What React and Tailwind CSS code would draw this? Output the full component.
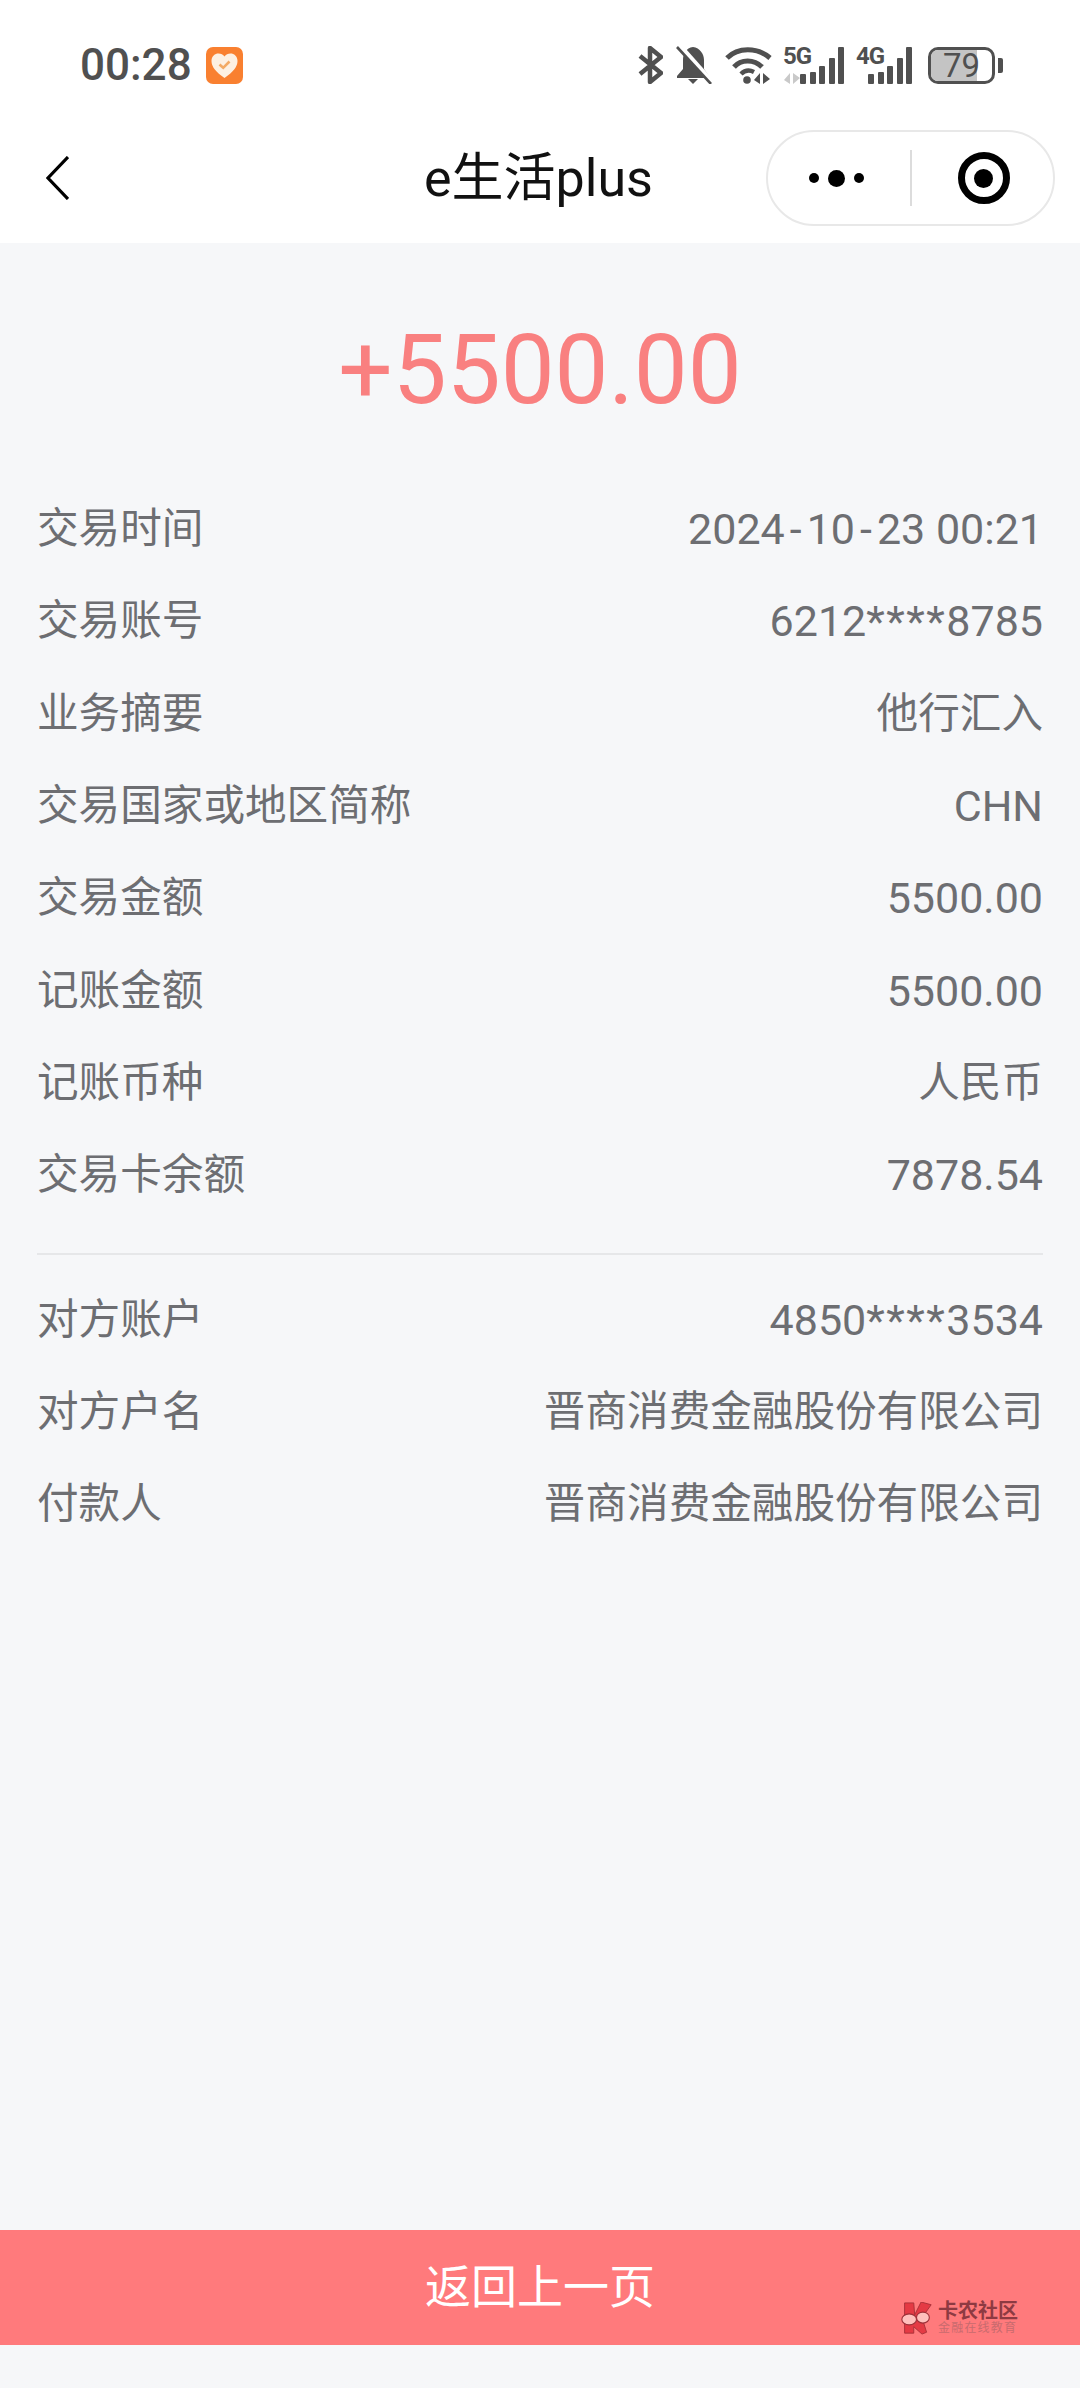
const sans = '"Roboto","Noto Sans CJK SC",sans-serif';

function Row({ label, children, latin }) {
  return (
    <div className="flex h-[92.3px] items-center justify-between">
      <span>{label}</span>
      <span className={latin ? "text-[43px]" : ""}>{children}</span>
    </div>
  );
}

function Stars() {
  return <span className="tracking-[1.5px]">****</span>;
}

function Hy() {
  return <span className="px-[5px]">-</span>;
}

function Bars({ hs }) {
  return (
    <div className="flex items-end gap-[3.5px]">
      {hs.map((h, i) => (
        <div key={i} className="w-[6px] rounded-[1px] bg-[#505050]" style={{ height: h }} />
      ))}
    </div>
  );
}

function StatusBar() {
  return (
    <div className="flex h-[130px] items-center justify-between pl-[80px] pr-[77px]">
      <div className="flex items-center gap-[14px]">
        <span className="text-[44px] font-medium leading-none text-[#505050]">00:28</span>
        <svg width="37" height="37" viewBox="0 0 37 37">
          <rect width="37" height="37" rx="7" fill="#f98030" />
          <path d="M18.5 31 C10 25 5.5 20 5.5 14 C5.5 9 9 6.5 12.5 6.5 C15 6.5 17.2 7.7 18.5 9.5 C19.8 7.7 22 6.5 24.5 6.5 C28 6.5 31.5 9 31.5 14 C31.5 20 27 25 18.5 31Z" fill="#fdf0e2" />
          <path d="M13.5 17.5 L17.2 20.8 L23.5 14.5" fill="none" stroke="#f3aa65" strokeWidth="2.6" />
        </svg>
      </div>
      <div className="flex items-center">
        <svg width="25" height="38" viewBox="0 0 25 38" fill="none" stroke="#505050" strokeWidth="4.5" strokeLinejoin="round" className="mr-[13px]">
          <path d="M2 10 L23 27 L12 36 V2 L23 11 L2 28" />
        </svg>
        <svg width="36" height="38" viewBox="0 0 36 38" className="mr-[13px]">
          <path d="M17 1 C10 2 7 8 7 14 V23 L1 30 V32 H33 V30 L28 23 V14 C28 8 24 2 17 1Z" fill="#505050" />
          <path d="M12 33 H22 L17 38Z" fill="#505050" />
          <path d="M4 0 L35 35" stroke="#fff" strokeWidth="5" />
          <path d="M1 1 L35 38" stroke="#505050" strokeWidth="2.6" />
        </svg>
        <svg width="47" height="37" viewBox="0 0 47 37" fill="none" className="mr-[11px]">
          <path d="M2 11 C13 0 32 0 45 11" stroke="#505050" strokeWidth="5" />
          <path d="M9 20 C16 12 29 12 37 20" stroke="#505050" strokeWidth="5" />
          <path d="M16 27 C20 23 25 23 29 25" stroke="#505050" strokeWidth="4.5" />
          <circle cx="22" cy="33" r="3.8" fill="#505050" />
          <path d="M35 37 V26 L29 33Z M38 26 V37 L45 32Z" fill="#505050" />
        </svg>
        <div className="relative mr-[12px] h-[37px] w-[61px]">
          <span className="absolute left-0 top-[-3px] text-[24px] font-bold leading-[24px] tracking-[-1px] text-[#505050]">5G</span>
          <svg width="18" height="11" viewBox="0 0 18 11" className="absolute bottom-0 left-0">
            <path d="M7 11 V0 L1 7Z M10 0 V11 L17 5Z" fill="#c9c9c9" />
          </svg>
          <div className="absolute bottom-0 right-0"><Bars hs={[10, 12, 18, 26, 37]} /></div>
        </div>
        <div className="relative mr-[16px] h-[37px] w-[56px]">
          <span className="absolute left-0 top-[-3px] text-[24px] font-bold leading-[24px] tracking-[-1px] text-[#505050]">4G</span>
          <div className="absolute bottom-0 right-0"><Bars hs={[10, 12, 18, 26, 37]} /></div>
        </div>
        <div className="flex items-center gap-[3px]">
          <div className="relative flex h-[37px] w-[67px] items-center justify-center overflow-hidden rounded-[10px] border-[3px] border-[#505050] bg-white">
            <div className="absolute inset-y-0 left-0 w-[46px] bg-[#c4c4c4]" />
            <span className="relative text-[33px] leading-none text-[#505050]">79</span>
          </div>
          <div className="h-[15px] w-[5px] rounded-r-[2px] bg-[#505050]" />
        </div>
      </div>
    </div>
  );
}

function NavBar() {
  return (
    <div className="relative flex h-[113px] items-center justify-between pb-[17px] pl-[46px] pr-[25px]">
      <svg width="23" height="44" viewBox="0 0 23 44" fill="none" stroke="#000" strokeWidth="3.2">
        <path d="M22 1 L2 22 L22 43" />
      </svg>
      <span className="absolute left-[424px] top-[16px] text-[52px] leading-[66px] text-[#111]">e生活plus</span>
      <div className="flex h-[96px] w-[289px] items-center rounded-full border-2 border-[#e8e8e8] bg-white">
        <div className="flex w-[142px] items-center justify-center gap-[9px] pr-[5px]">
          <span className="h-[10px] w-[10px] rounded-full bg-black" />
          <span className="h-[17px] w-[17px] rounded-full bg-black" />
          <span className="h-[10px] w-[10px] rounded-full bg-black" />
        </div>
        <div className="h-[56px] w-[2px] bg-[#dcdcdc]" />
        <div className="flex flex-1 items-center justify-center pl-[2px]">
          <div className="flex h-[52px] w-[52px] items-center justify-center rounded-full border-[7px] border-black">
            <span className="h-[19px] w-[19px] rounded-full bg-black" />
          </div>
        </div>
      </div>
    </div>
  );
}

function Watermark() {
  return (
    <div className="absolute bottom-[10px] left-[100px] flex items-center gap-[5px]">
      <svg width="33" height="33" viewBox="0 0 36 36">
        <path d="M5 1 H15 L16 14 L23 0 L34 3 L24 17 L29 33 L24 35 L15 27 V34 H5Z" fill="#e43a44" stroke="#a83038" strokeWidth="1" />
        <ellipse cx="10" cy="19" rx="8" ry="6" fill="#ffc0bc" stroke="#9c3038" strokeWidth="1.2" />
        <ellipse cx="25" cy="17" rx="7" ry="6" fill="#ffc0bc" stroke="#9c3038" strokeWidth="1.2" />
      </svg>
      <div className="flex flex-col">
        <span className="text-[20px] font-bold leading-[20px] text-[#8e3a42]">卡农社区</span>
        <span className="text-[12px] leading-[14px] tracking-[1.2px] text-[#c96a6e]">金融在线教育</span>
      </div>
    </div>
  );
}

export default function App() {
  return (
    <div className="flex h-[2388px] w-[1080px] flex-col overflow-hidden bg-[#f6f7f9]" style={{ fontFamily: sans }}>
      <header className="h-[243px] bg-white">
        <StatusBar />
        <NavBar />
      </header>
      <main className="flex flex-1 flex-col">
        <div className="flex h-[183px] items-end justify-center text-[96px] leading-[112px] text-[#f98080]">
          +5500.00
        </div>
        <div className="px-[37px] pt-[57px] text-[41.6px] leading-[56px] text-[#6d6e72]">
          <Row label="交易时间" latin>2024<Hy />10<Hy />23 00:21</Row>
          <Row label="交易账号" latin>6212<Stars />8785</Row>
          <Row label="业务摘要">他行汇入</Row>
          <Row label="交易国家或地区简称" latin>CHN</Row>
          <Row label="交易金额" latin>5500.00</Row>
          <Row label="记账金额" latin>5500.00</Row>
          <Row label="记账币种">人民币</Row>
          <Row label="交易卡余额" latin>7878.54</Row>
          <div className="mb-[18px] mt-[32px] h-[2px] bg-[#e6e7e9]" />
          <Row label="对方账户" latin>4850<Stars />3534</Row>
          <Row label="对方户名">晋商消费金融股份有限公司</Row>
          <Row label="付款人">晋商消费金融股份有限公司</Row>
        </div>
        <div className="flex-1" />
        <div className="relative mb-[43px] flex h-[115px] items-center justify-center bg-[#ff7a7c] text-[46px] text-white">
          返回上一页
          <div className="absolute inset-y-0 left-[800px] right-0">
            <Watermark />
          </div>
        </div>
      </main>
    </div>
  );
}
